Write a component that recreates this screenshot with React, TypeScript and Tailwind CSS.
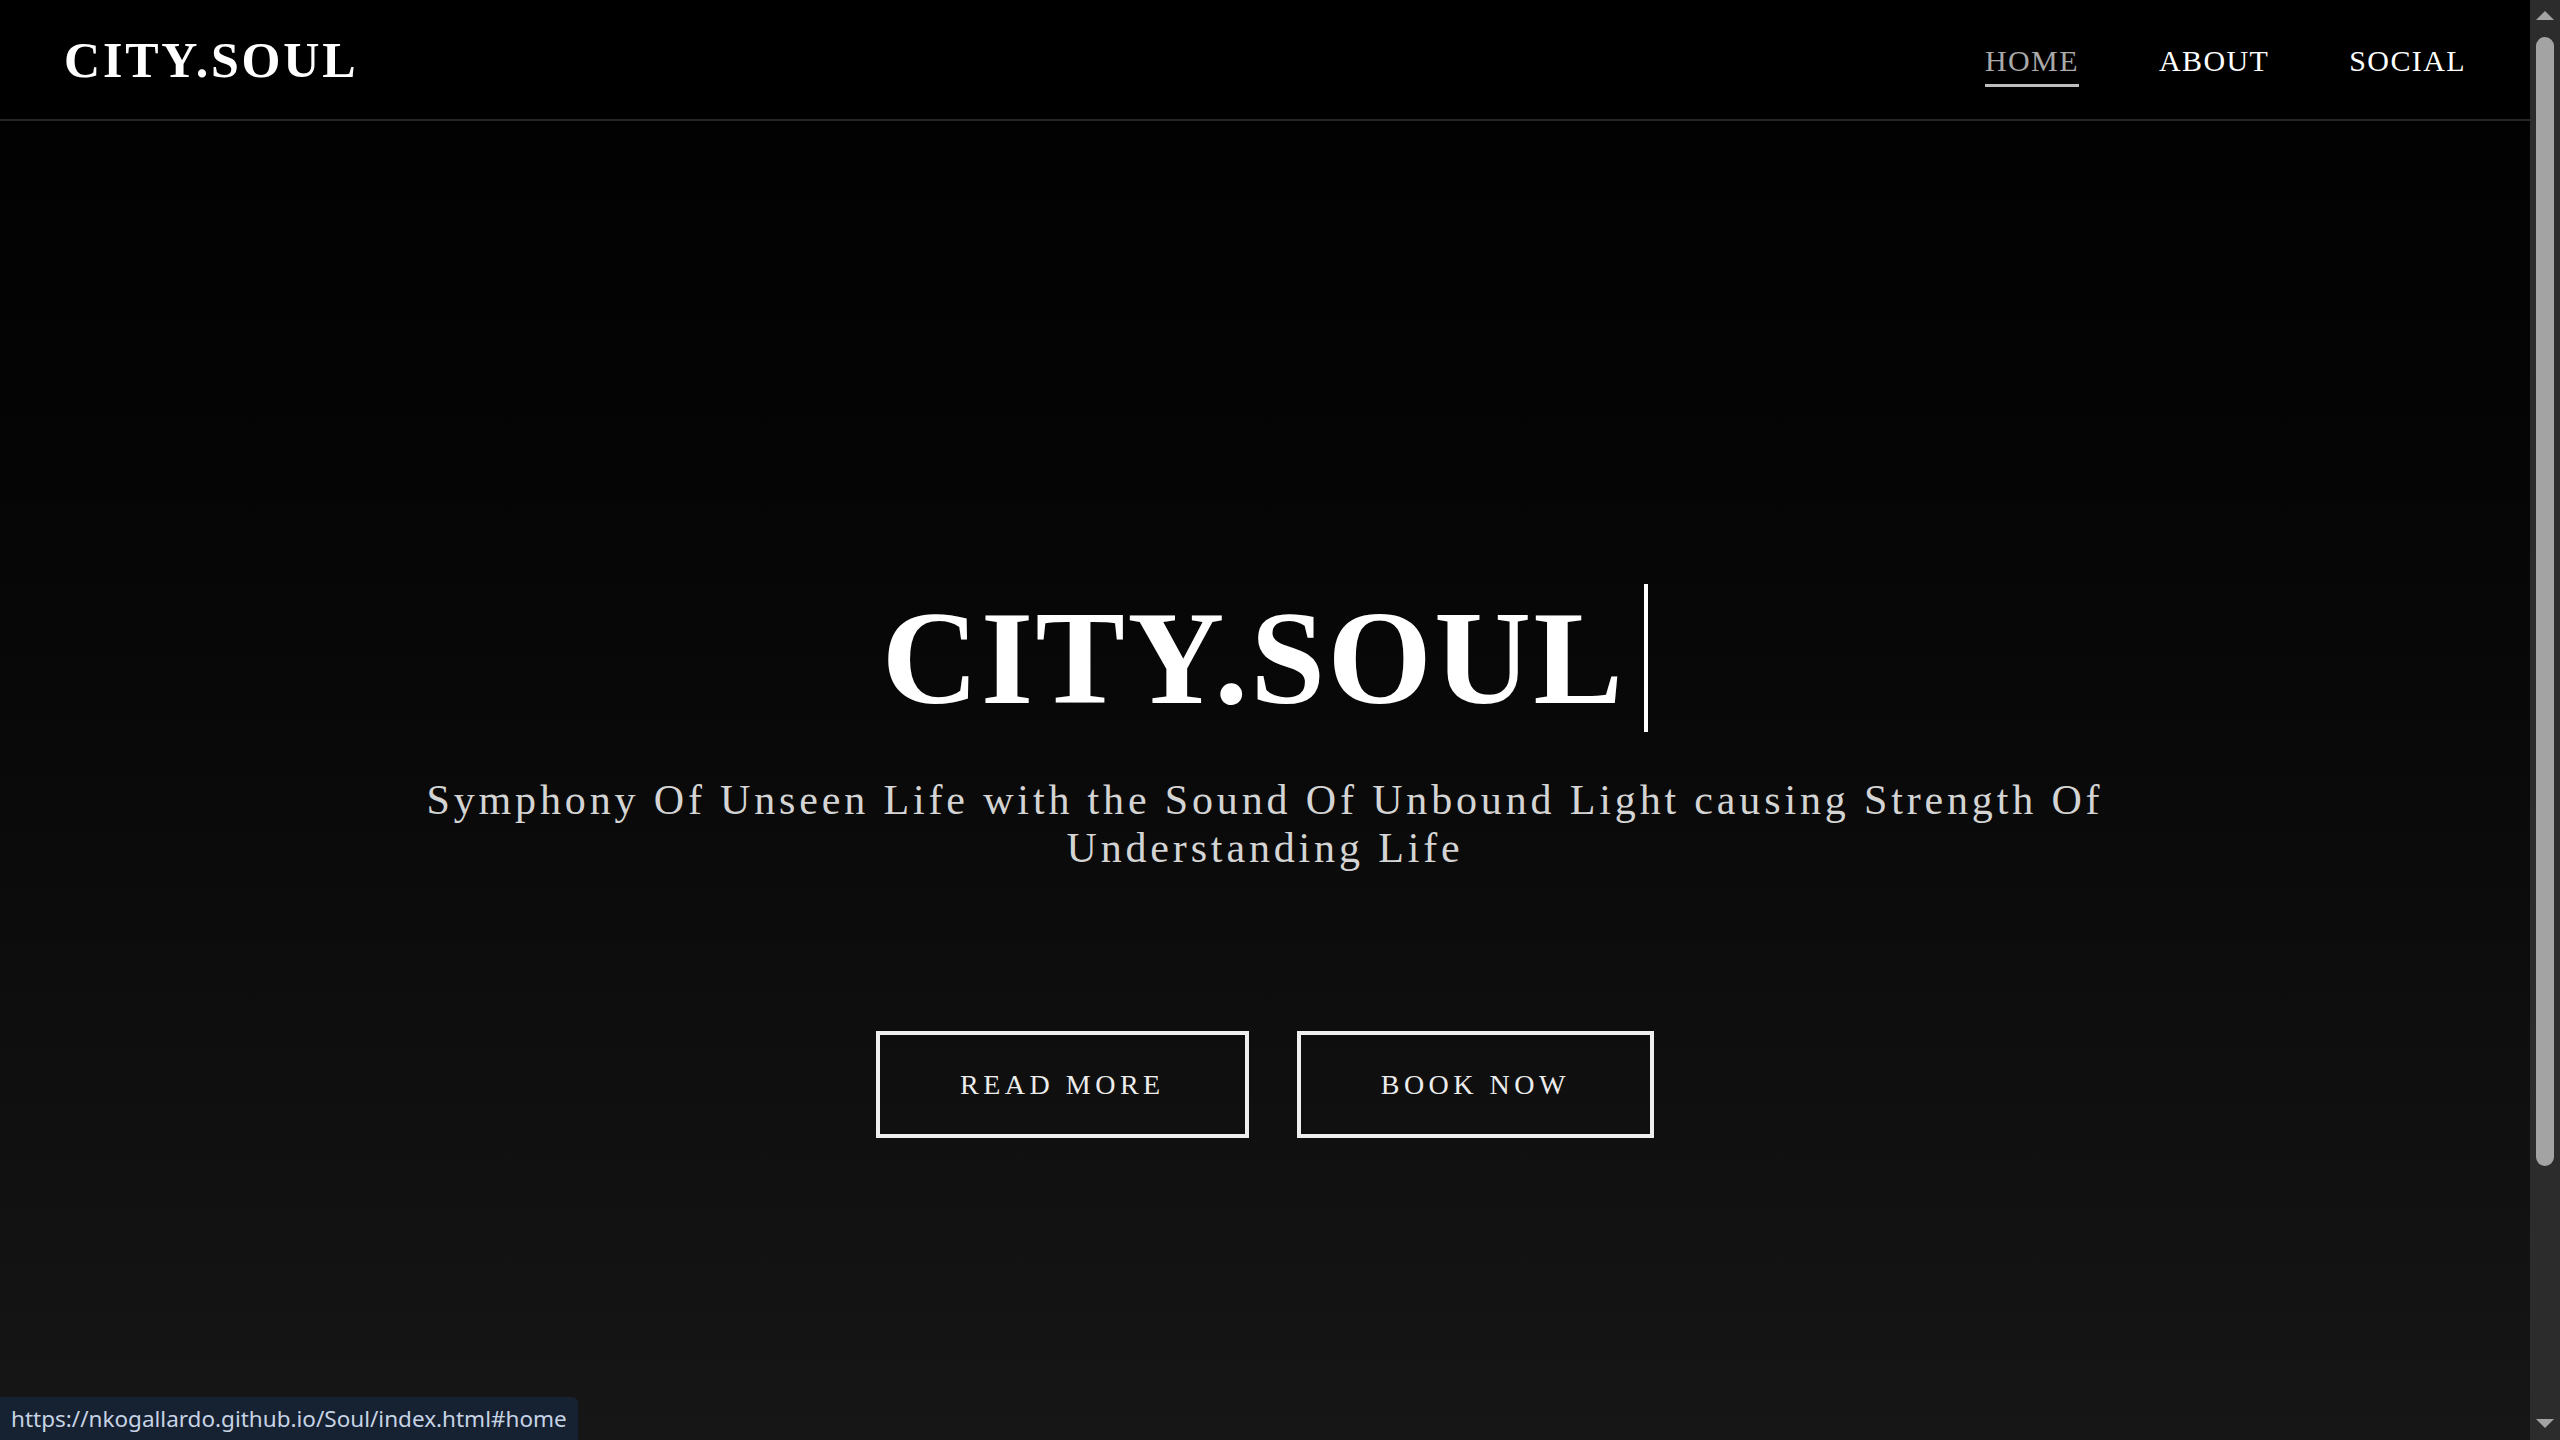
const navLinks = [
  { label: "HOME", active: true },
  { label: "ABOUT", active: false },
  { label: "SOCIAL", active: false },
];

const serif = "font-['Liberation_Serif','Times_New_Roman',serif]";

function Header() {
  return (
    <header className="flex h-[121px] shrink-0 items-center justify-between border-b-2 border-[#262626] bg-black px-[64px]">
      <a
        href="#home"
        className={`${serif} text-[50px] font-bold leading-[56px] tracking-[2.8px] text-white`}
      >
        CITY.SOUL
      </a>
      <nav className="mt-[3px]">
        <ul className="flex items-center gap-[80px]">
          {navLinks.map((link) => (
            <li key={link.label}>
              <a
                href={`#${link.label.toLowerCase()}`}
                className={`${serif} relative block text-[30px] leading-[34px] tracking-[1.4px] ${
                  link.active ? "text-[#a9a9a9]" : "text-white"
                }`}
              >
                {link.label}
                {link.active && (
                  <span className="absolute -bottom-[9px] left-0 right-0 h-[3px] bg-[#bdbdbd]" />
                )}
              </a>
            </li>
          ))}
        </ul>
      </nav>
    </header>
  );
}

function Hero() {
  return (
    <section
      id="home"
      className="flex flex-1 flex-col items-center bg-gradient-to-b from-[#020202] to-[#161616] pt-[463px]"
    >
      <h1
        className={`${serif} text-center text-[134px] font-bold leading-[148px] tracking-[2.5px] text-white`}
      >
        <span className="border-r-4 border-white pr-[19px]">CITY.SOUL</span>
      </h1>
      <p
        className={`${serif} mt-[44px] max-w-[1780px] text-center text-[42px] leading-[48px] tracking-[3.85px] text-[#d4d4d4]`}
      >
        Symphony Of Unseen Life with the Sound Of Unbound Light causing Strength Of Understanding Life
      </p>
      <div className="mt-[159px] flex gap-[48px]">
        <a
          href="#about"
          className={`${serif} border-4 border-[#efefef] px-[80px] py-[34px] text-[28px] leading-[31px] tracking-[4.5px] text-[#ececec]`}
        >
          READ MORE
        </a>
        <a
          href="#social"
          className={`${serif} border-4 border-[#efefef] px-[80px] py-[34px] text-[28px] leading-[31px] tracking-[4.5px] text-[#ececec]`}
        >
          BOOK NOW
        </a>
      </div>
    </section>
  );
}

function Scrollbar() {
  return (
    <div className="flex w-[30px] shrink-0 flex-col items-center bg-[#2c2c2c] pb-[12px] pt-[11px]">
      <svg width="18" height="9" viewBox="0 0 18 9">
        <polygon points="9,0 18,9 0,9" fill="#a3a3a3" />
      </svg>
      <div className="mt-[17px] h-[1129px] w-[18px] rounded-[9px] bg-[#a3a3a3]" />
      <div className="flex-1" />
      <svg width="18" height="9" viewBox="0 0 18 9">
        <polygon points="0,0 18,0 9,9" fill="#a3a3a3" />
      </svg>
    </div>
  );
}

export default function App() {
  return (
    <div className="relative flex h-[1440px] w-full overflow-hidden bg-black">
      <main className="flex min-w-0 flex-1 flex-col">
        <Header />
        <Hero />
      </main>
      <Scrollbar />
      <div className="absolute bottom-0 left-0 flex h-[43px] w-[578px] items-center rounded-tr-[6px] bg-[#162131] px-[11px] font-['Noto_Sans','Open_Sans',sans-serif] text-[22.5px] text-[#c6d3e4]">
        https://nkogallardo.github.io/Soul/index.html#home
      </div>
    </div>
  );
}
